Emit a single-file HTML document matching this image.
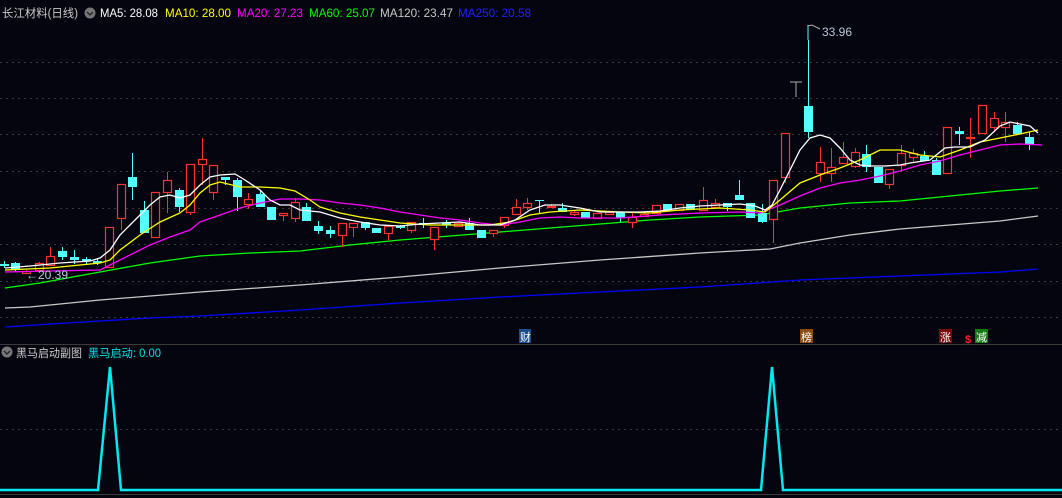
<!DOCTYPE html>
<html><head><meta charset="utf-8"><style>
html,body{margin:0;padding:0;background:#05050f;width:1062px;height:498px;overflow:hidden}
svg{display:block}
text{font-family:"Liberation Sans","Noto Sans CJK SC",sans-serif}
</style></head><body>
<svg id="s" width="1062" height="498" viewBox="0 0 1062 498" xmlns="http://www.w3.org/2000/svg">
<rect width="1062" height="498" fill="#05050f"/>
<g stroke="#3a3a44" stroke-width="1" stroke-dasharray="2,4">
<line x1="0" y1="62.5" x2="1062" y2="62.5"/><line x1="0" y1="98.5" x2="1062" y2="98.5"/>
<line x1="0" y1="134.5" x2="1062" y2="134.5"/><line x1="0" y1="171.5" x2="1062" y2="171.5"/>
<line x1="0" y1="208.5" x2="1062" y2="208.5"/><line x1="0" y1="244.5" x2="1062" y2="244.5"/>
<line x1="0" y1="281.5" x2="1062" y2="281.5"/><line x1="0" y1="317.5" x2="1062" y2="317.5"/>
<line x1="0" y1="429.5" x2="1062" y2="429.5"/>
</g>
<line x1="0" y1="344.5" x2="1062" y2="344.5" stroke="#3a3a3a"/>
<line x1="0" y1="494.5" x2="1062" y2="494.5" stroke="#3a3a3a"/>
<g fill="none" stroke-width="1.3">
<polyline stroke="#0000ff" points="5,327 50,324 100,321 150,318 200,316 300,310 400,303 500,297 600,292 700,287 800,280 900,276 1000,272 1038,269"/>
<polyline stroke="#c8c8c8" points="5,308 30,307 100,300 200,292 300,285 400,277 500,268 600,260 700,253 770,249 800,243 850,235 900,229 950,225 1000,221 1038,216"/>
<polyline stroke="#00ff00" points="5,288 40,283 100,272 150,263 200,256 250,253 300,251 350,245 400,240 450,236 500,232 550,228 600,224 650,220 700,217 760,215 800,208 850,203 900,201 950,196 1000,191 1038,188"/>
</g>
<g id="c"></g>
<g fill="none" stroke-width="1.3">
<polyline stroke="#ff00ff" points="5,272 50,271 100,270 110,265 130,255 150,245 170,237 190,230 200,222 220,215 240,208 260,203 280,199 300,199 320,200 340,203 360,205 380,208 400,212 420,215 440,218 460,220 480,223 500,225 520,222 540,218 560,217 580,218 620,218 660,215 700,213 740,212 760,213 780,205 800,196 820,188 840,183 860,180 880,176 900,171 920,165 940,161 960,155 980,150 1000,145 1020,144 1042,145"/>
<polyline stroke="#ffff00" points="5,270 50,268 100,263 110,260 120,250 140,235 160,222 180,213 190,205 200,193 210,185 220,182 240,187 260,187 280,188 295,191 310,200 320,207 340,213 360,217 380,220 400,223 430,225 460,225 490,225 510,222 530,215 550,212 580,210 620,212 650,213 680,210 720,208 750,210 765,212 780,200 800,183 820,175 840,168 860,160 880,150 900,150 920,155 940,157 960,150 980,142 1000,138 1020,134 1038,130"/>
<polyline stroke="#ffffff" points="5,268 30,266 60,263 90,261 100,258 110,250 120,235 130,225 140,215 150,205 160,197 170,195 180,198 190,195 200,185 210,177 220,175 235,174 245,180 260,190 270,200 280,205 290,205 300,210 320,212 340,218 360,222 380,225 400,226 420,224 440,223 460,222 480,225 500,225 515,220 530,210 545,205 560,205 580,208 600,212 640,212 660,211 680,208 700,206 720,205 740,204 755,206 765,210 772,205 780,190 790,170 800,150 810,138 820,135 830,138 840,148 850,160 860,165 870,166 885,166 900,165 910,163 930,160 945,148 955,147 970,147 985,140 1000,126 1010,122 1020,124 1030,126 1038,133"/>
</g>
<line x1="808" y1="25" x2="808" y2="40" stroke="#54ffff"/>
<polyline points="808,26 812,25 820,29" fill="none" stroke="#aaa"/>
<text x="822" y="36" font-size="12" fill="#b8c8d8">33.96</text>
<line x1="790" y1="82" x2="802" y2="82" stroke="#aaa"/><line x1="796" y1="82" x2="796" y2="97" stroke="#aaa"/>
<text x="26" y="279" font-size="12" fill="#b8c8d8">←20.39</text>
<rect x="519" y="329" width="12" height="14" fill="#1c4e8c"/><text x="520" y="341" font-size="11" fill="#fff">财</text>
<rect x="800" y="329" width="13" height="14" fill="#8a4a10"/><text x="801" y="341" font-size="11" fill="#fff">榜</text>
<rect x="939" y="329" width="13" height="14" fill="#7a0a0a"/><text x="940" y="341" font-size="11" fill="#fff">涨</text>
<text x="965" y="343" font-size="11" fill="#ff2020" font-weight="bold">$</text>
<rect x="975" y="329" width="13" height="14" fill="#127a12"/><text x="976" y="341" font-size="11" fill="#fff">减</text>
<polyline fill="none" stroke="#00e8f0" stroke-width="2.5" points="0,490 98,490 110,367 121,490 761,490 772,367 783,490 1062,490"/>
<text x="2" y="17" font-size="11.5" fill="#c8c8c8" textLength="76" lengthAdjust="spacingAndGlyphs">长江材料(日线)</text>
<circle cx="90" cy="13" r="5.5" fill="#777"/><polyline points="87,12 90,15 93,12" fill="none" stroke="#222" stroke-width="1.3"/>
<text x="100" y="17" font-size="11.5" fill="#ffffff" textLength="58" lengthAdjust="spacingAndGlyphs">MA5: 28.08</text>
<text x="165" y="17" font-size="11.5" fill="#ffff00" textLength="66" lengthAdjust="spacingAndGlyphs">MA10: 28.00</text>
<text x="237" y="17" font-size="11.5" fill="#ff00ff" textLength="66" lengthAdjust="spacingAndGlyphs">MA20: 27.23</text>
<text x="309" y="17" font-size="11.5" fill="#00ff00" textLength="66" lengthAdjust="spacingAndGlyphs">MA60: 25.07</text>
<text x="380" y="17" font-size="11.5" fill="#c8c8c8" textLength="73" lengthAdjust="spacingAndGlyphs">MA120: 23.47</text>
<text x="458" y="17" font-size="11.5" fill="#2020ff" textLength="73" lengthAdjust="spacingAndGlyphs">MA250: 20.58</text>
<circle cx="7" cy="352" r="5.5" fill="#777"/><polyline points="4,351 7,354 10,351" fill="none" stroke="#222" stroke-width="1.3"/>
<text x="16" y="357" font-size="11.5" fill="#c8c8c8" textLength="66" lengthAdjust="spacingAndGlyphs">黑马启动副图</text>
<text x="88" y="357" font-size="11.5" fill="#00e0e0" textLength="73" lengthAdjust="spacingAndGlyphs">黑马启动: 0.00</text>
</svg>
<script>
var d=[
[4,'c',264,266,261,268],[15,'c',263,270,262,271],[26,'r',271,273,270,274],[39,'r',263,270,262,271],[50,'r',256,265,247,266],
[62,'c',251,257,247,260],[74,'c',257,260,250,264],[86,'c',259,261,257,264],[97,'c',261,263,258,265],[109,'r',227,267,227,267],
[121,'r',184,218,184,230],[132,'c',177,187,153,200],[144,'c',210,233,201,233],[155,'r',192,237,192,237],[167,'r',180,192,172,213],
[179,'c',190,207,188,212],[190,'r',164,212,164,215],[202,'r',159,164,138,185],[213,'r',165,192,165,200],[225,'c',177,180,177,185],
[237,'c',180,197,178,211],[248,'r',199,204,193,209],[260,'c',194,207,190,207],[271,'c',207,220,207,220],[283,'r',213,215,213,221],
[295,'r',202,218,198,222],[306,'c',207,221,203,221],[318,'c',226,231,221,234],[330,'c',230,234,226,238],[342,'r',223,235,223,247],
[353,'r',223,227,223,237],[365,'c',222,228,222,230],[376,'c',228,233,228,233],[388,'r',226,233,226,240],[400,'c',226,228,225,229],
[411,'r',222,230,222,233],[423,'c',223,224,218,228],[434,'r',227,239,227,250],[446,'c',223,225,220,228],[458,'r',223,226,223,226],
[469,'c',223,230,218,230],[481,'c',230,238,230,238],[493,'r',230,233,230,237],[504,'r',217,225,217,228],[516,'r',207,214,199,214],
[527,'r',203,207,198,210],[539,'c',200,201,200,213],[551,'r',206,207,204,208],[562,'c',208,212,203,212],[574,'r',212,214,210,216],
[585,'c',212,218,212,218],[597,'r',213,218,213,218],[609,'r',212,214,211,215],[620,'c',212,218,212,222],[632,'r',217,222,213,228],
[644,'r',214,216,213,217],[656,'r',205,213,205,213],[667,'c',204,211,204,211],[679,'r',204,210,204,210],[690,'c',204,209,204,209],
[703,'r',200,210,187,210],[715,'r',203,207,199,207],[727,'c',203,207,203,211],[739,'c',195,200,180,200],[750,'c',203,218,203,218],
[762,'c',213,222,204,223],[773,'r',180,219,180,243],[785,'r',133,177,133,183],[808,'c',106,132,40,138],[820,'r',162,173,147,182],
[831,'r',167,173,148,182],[843,'r',157,163,142,163],[855,'r',152,166,148,168],[866,'c',154,167,145,172],[878,'c',167,183,167,183],
[889,'r',169,184,169,189],[901,'r',153,165,145,172],[913,'r',153,157,149,163],[924,'c',156,161,151,161],[936,'c',160,175,158,175],
[947,'r',127,173,127,173],[959,'c',131,134,127,145],[970,'r',137,138,118,158],[982,'r',105,133,105,133],[994,'r',118,127,112,132],
[1005,'r',122,127,112,142],[1017,'c',125,134,122,134],[1029,'c',137,144,132,150]];
var h='';d.forEach(function(a){var x=a[0],col=a[1]=='r'?'#ff3232':'#54ffff';
h+='<line x1="'+(x+.5)+'" y1="'+a[4]+'" x2="'+(x+.5)+'" y2="'+a[5]+'" stroke="'+col+'"/>';
var ht=Math.max(1,a[3]-a[2]);
if(a[1]=='r')h+='<rect x="'+(x-3.5)+'" y="'+(a[2]+.5)+'" width="8" height="'+ht+'" fill="#05050f" stroke="'+col+'" stroke-width="1.2"/>';
else h+='<rect x="'+(x-4)+'" y="'+a[2]+'" width="9" height="'+ht+'" fill="'+col+'"/>';});
document.getElementById('c').innerHTML=h;
</script>
</body></html>
